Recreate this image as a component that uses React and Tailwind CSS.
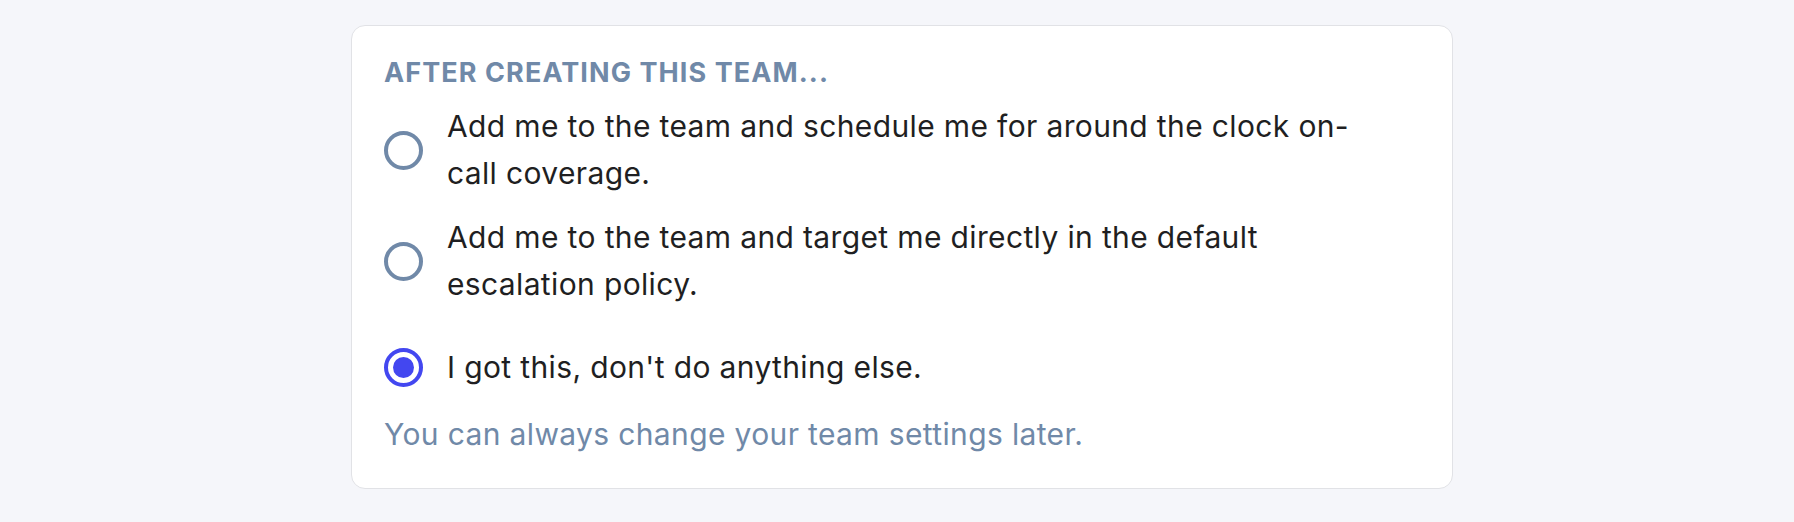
import { useState } from 'react';

const options = [
  { id: 'schedule', label: 'Add me to the team and schedule me for around the clock on-call coverage.' },
  { id: 'target', label: 'Add me to the team and target me directly in the default escalation policy.' },
  { id: 'nothing', label: "I got this, don't do anything else." },
];

function Radio({ checked }) {
  return (
    <span
      className={
        'flex h-[39px] w-[39px] shrink-0 items-center justify-center rounded-full border-[4.5px] ' +
        (checked ? 'border-[#4347f0]' : 'border-[#7089a8]')
      }
    >
      {checked && <span className="h-[21px] w-[21px] rounded-full bg-[#4347f0]" />}
    </span>
  );
}

export default function App() {
  const [choice, setChoice] = useState('nothing');

  return (
    <div className="min-h-[522px] bg-[#f5f6fa] pt-[25px] pl-[10px]" style={{ fontFamily: 'Inter, "Noto Sans", sans-serif' }}>
      <div className="mx-auto w-[1102px] rounded-[14px] border border-[#e1e2e6] bg-white px-[32px] pt-[31px] pb-[30px]">
        <h3 className="text-[27px] font-bold uppercase leading-[32px] tracking-[0.04em] text-[#7089a8]">
          After creating this team...
        </h3>

        <div className="mt-[14px] flex flex-col">
          {options.map((opt, i) => (
            <label
              key={opt.id}
              onClick={() => setChoice(opt.id)}
              className={
                'flex cursor-pointer items-center gap-[24px] ' +
                (i === 1 ? 'mt-[17px]' : '') +
                (i === 2 ? 'mt-[36px]' : '')
              }
            >
              <Radio checked={choice === opt.id} />
              <span className="max-w-[930px] text-[30px] leading-[47px] tracking-[0.012em] text-[#1f1f22]">{opt.label}</span>
            </label>
          ))}
        </div>

        <p className="mt-[20px] text-[30px] leading-[47px] tracking-[0.012em] text-[#7089a8]">
          You can always change your team settings later.
        </p>
      </div>
    </div>
  );
}
